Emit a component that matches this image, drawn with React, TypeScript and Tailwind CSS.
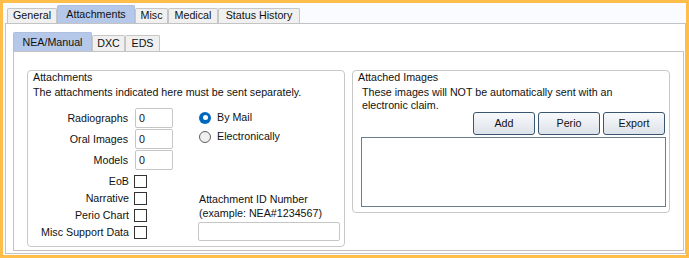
import React from 'react';

const topTabs = [
  { label: 'General', w: 'w-[50px]' },
  { label: 'Attachments', w: 'w-[78px]', active: true },
  { label: 'Misc', w: 'w-[33px]' },
  { label: 'Medical', w: 'w-[50px]' },
  { label: 'Status History', w: 'w-[82px]' },
];

const subTabs = [
  { label: 'NEA/Manual', w: 'w-[79px]', active: true },
  { label: 'DXC', w: 'w-[33px]' },
  { label: 'EDS', w: 'w-[35px]' },
];

function NumberBox({ label }: { label: string }) {
  return (
    <div className="flex items-center h-[20px]">
      <span className="w-[100px] text-right">{label}</span>
      <div className="ml-[7px] w-[38px] h-[20px] border border-[#c6c6c6] rounded-[2px] bg-white pl-[3px] flex items-center">
        0
      </div>
    </div>
  );
}

function CheckRow({ label }: { label: string }) {
  return (
    <div className="flex items-center h-[17px]">
      <span className="w-[101px] text-right">{label}</span>
      <div className="ml-[5px] w-[13px] h-[13px] border border-[#333] bg-white" />
    </div>
  );
}

function Radio({ label, checked }: { label: string; checked?: boolean }) {
  return (
    <div className="flex items-center h-[19px] pl-[1px]">
      {checked ? (
        <div className="w-[12px] h-[12px] rounded-full bg-[#0067c0] flex items-center justify-center">
          <div className="w-[5px] h-[5px] rounded-full bg-white" />
        </div>
      ) : (
        <div className="w-[12px] h-[12px] rounded-full border border-[#5f5f5f] bg-[#f0f0f0]" />
      )}
      <span className="ml-[6px]">{label}</span>
    </div>
  );
}

function WinButton({ label }: { label: string }) {
  return (
    <div className="w-[62px] h-[23px] border border-[#3a5570] rounded-[3px] bg-linear-to-b from-[#f8f9fb] to-[#dde3ea] flex items-center justify-center">
      {label}
    </div>
  );
}

export default function App() {
  return (
    <div className="w-[689px] h-[258px] border-[3px] border-[#ffbd4a] bg-[#fafbfe] flex flex-col text-[10.7px] leading-[13px] text-[#111] font-['Liberation_Sans',Arial,sans-serif]">
      {/* top tabs */}
      <div className="flex items-end h-[20px] pl-[4px]">
        {topTabs.map((t) =>
          t.active ? (
            <div key={t.label} className={`${t.w} h-[18px] bg-[#b5c8e9] border border-b-0 border-[#aebfdd] rounded-t-[2px] text-center pt-[2px]`}>
              {t.label}
            </div>
          ) : (
            <div key={t.label} className={`${t.w} h-[15px] bg-[#f0f0f0] border border-b-0 border-[#c6c6c6] rounded-t-[2px] text-center pt-[0px]`}>
              {t.label}
            </div>
          )
        )}
      </div>

      {/* outer page */}
      <div className="ml-[2px] mb-[1px] flex-1 border border-[#c3c3c3] bg-white flex flex-col pl-[7px] pr-[1px] pt-[8px] pb-[2px]">
        <div className="flex items-end h-[19px]">
          {subTabs.map((t) =>
            t.active ? (
              <div key={t.label} className={`${t.w} h-[19px] bg-[#b5c8e9] border border-b-0 border-[#aebfdd] rounded-t-[2px] text-center pt-[3px]`}>
                {t.label}
              </div>
            ) : (
              <div key={t.label} className={`${t.w} h-[16px] bg-[#f0f0f0] border border-b-0 border-[#c6c6c6] rounded-t-[2px] text-center pt-[1px]`}>
                {t.label}
              </div>
            )
          )}
        </div>

        {/* inner page */}
        <div className="flex-1 border border-[#c3c3c3] bg-white flex items-start gap-[7px] pl-[13px] pt-[18px]">
          {/* Attachments group */}
          <div className="w-[318px] h-[177px] border border-[#c8c8c8] rounded-[4px] flex flex-col">
            <div className="pl-[5px]">Attachments</div>
            <div className="pl-[5px] mt-[2px]">The attachments indicated here must be sent separately.</div>
            <div className="flex mt-[9px]">
              <div className="flex flex-col">
                <div className="flex flex-col gap-[1px]">
                  <NumberBox label="Radiographs" />
                  <NumberBox label="Oral Images" />
                  <NumberBox label="Models" />
                </div>
                <div className="flex flex-col mt-[3px]">
                  <CheckRow label="EoB" />
                  <CheckRow label="Narrative" />
                  <CheckRow label="Perio Chart" />
                  <CheckRow label="Misc Support Data" />
                </div>
              </div>
              <div className="flex flex-col ml-[25px]">
                <Radio label="By Mail" checked />
                <Radio label="Electronically" />
                <div className="mt-[46px] pl-[1px] leading-[14px]">
                  Attachment ID Number
                  <br />
                  (example: NEA#1234567)
                </div>
                <div className="mt-[2px] w-[142px] h-[19px] border border-[#c6c6c6] rounded-[2px] bg-white" />
              </div>
            </div>
          </div>

          {/* Attached Images group */}
          <div className="w-[318px] h-[143px] border border-[#c8c8c8] rounded-[4px] flex flex-col">
            <div className="pl-[5px]">Attached Images</div>
            <div className="pl-[9px] mt-[2px]">
              These images will NOT be automatically sent with an
              <br />
              electronic claim.
            </div>
            <div className="flex justify-end gap-[3px] pr-[4px]">
              <WinButton label="Add" />
              <WinButton label="Perio" />
              <WinButton label="Export" />
            </div>
            <div className="ml-[8px] mt-[2px] w-[305px] h-[70px] border border-[#6e7d8c] bg-white" />
          </div>
        </div>
      </div>
    </div>
  );
}
